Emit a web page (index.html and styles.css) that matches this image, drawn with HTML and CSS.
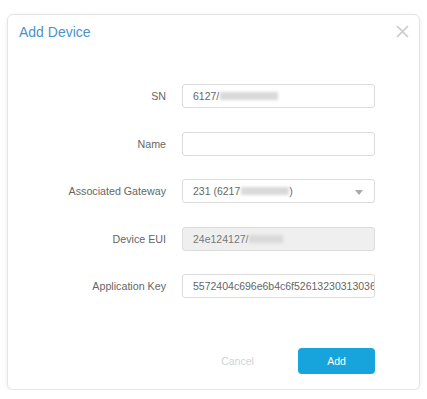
FILE: index.html
```html
<!DOCTYPE html>
<html lang="en">

<head>
    <meta charset="UTF-8">
    <meta name="viewport" content="width=device-width, initial-scale=1.0">
    <title>Add Device</title>
    <link rel="stylesheet" href="styles.css">
</head>

<body>

    <div class="dialog">
        <div class="dialog-header">
            <h2>Add Device</h2>
            <button class="close-btn" aria-label="Close">
                <svg width="13" height="13" viewBox="0 0 13 13">
                    <path d="M1 1 L12 12 M12 1 L1 12" stroke="#c9c9c9" stroke-width="1.6" fill="none" />
                </svg>
            </button>
        </div>

        <div class="dialog-body">
            <div class="form-row">
                <label>SN</label>
                <div class="field">6127/<span class="masked" style="width: 58px"></span></div>
            </div>
            <div class="form-row">
                <label>Name</label>
                <div class="field"></div>
            </div>
            <div class="form-row">
                <label>Associated Gateway</label>
                <div class="field select">231 (6217<span class="masked" style="width: 48px"></span>)
                    <span class="arrow"></span>
                </div>
            </div>
            <div class="form-row">
                <label>Device EUI</label>
                <div class="field disabled">24e124127/<span class="masked" style="width: 34px"></span></div>
            </div>
            <div class="form-row">
                <label>Application Key</label>
                <div class="field">5572404c696e6b4c6f52613230313036</div>
            </div>
        </div>

        <div class="dialog-footer">
            <button class="cancel-btn">Cancel</button>
            <button class="add-btn">Add</button>
        </div>
    </div>

</body>

</html>
```

FILE: styles.css
```css
body {
    margin: 0;
    background-color: white;
    font-family: 'Liberation Sans', Arial, sans-serif;
}

.dialog {
    margin: 14px 7px 0 7px;
    width: 411px;
    height: 374px;
    border: 1px solid #e4e4e4;
    border-radius: 6px;
    box-shadow: 0 1px 4px rgba(0, 0, 0, 0.08);
    display: flex;
    flex-direction: column;
}

.dialog-header {
    display: flex;
    justify-content: space-between;
    align-items: center;
    height: 33px;
    padding: 0 10px 0 11px;
}

    .dialog-header h2 {
        margin: 0;
        font-size: 14px;
        font-weight: normal;
        color: #4a93c8;
    }

.close-btn {
    background: none;
    border: none;
    padding: 0;
    margin: 0;
    display: flex;
    cursor: pointer;
}

.dialog-body {
    display: flex;
    flex-direction: column;
    gap: 23.5px;
    padding-top: 36px;
}

.form-row {
    display: flex;
    align-items: center;
    gap: 16px;
}

    .form-row label {
        width: 158px;
        text-align: right;
        font-size: 10.7px;
        color: #666;
    }

.field {
    box-sizing: border-box;
    width: 193px;
    height: 24px;
    border: 1px solid #dcdcdc;
    border-radius: 3px;
    padding: 0 10px;
    font-size: 10.5px;
    color: #666;
    display: flex;
    align-items: center;
    white-space: nowrap;
    overflow: hidden;
    position: relative;
}

    .field.disabled {
        background-color: #efefef;
        color: #777;
    }

.masked {
    display: inline-block;
    height: 8px;
    background-color: #d9d9d9;
    filter: blur(1.5px);
    margin-left: 1px;
}

.arrow {
    position: absolute;
    right: 11px;
    top: 10px;
    border-left: 4px solid transparent;
    border-right: 4px solid transparent;
    border-top: 5px solid #aaa;
}

.dialog-footer {
    margin-top: auto;
    display: flex;
    justify-content: flex-end;
    gap: 22px;
    padding: 0 44px 15px 0;
}

.cancel-btn {
    width: 77px;
    height: 26px;
    background: none;
    border: none;
    font-family: inherit;
    font-size: 10.5px;
    color: #cdd3d9;
    cursor: pointer;
}

.add-btn {
    width: 77px;
    height: 26px;
    background-color: #17a3dc;
    border: none;
    border-radius: 4px;
    font-family: inherit;
    font-size: 10.5px;
    color: white;
    cursor: pointer;
}
```
